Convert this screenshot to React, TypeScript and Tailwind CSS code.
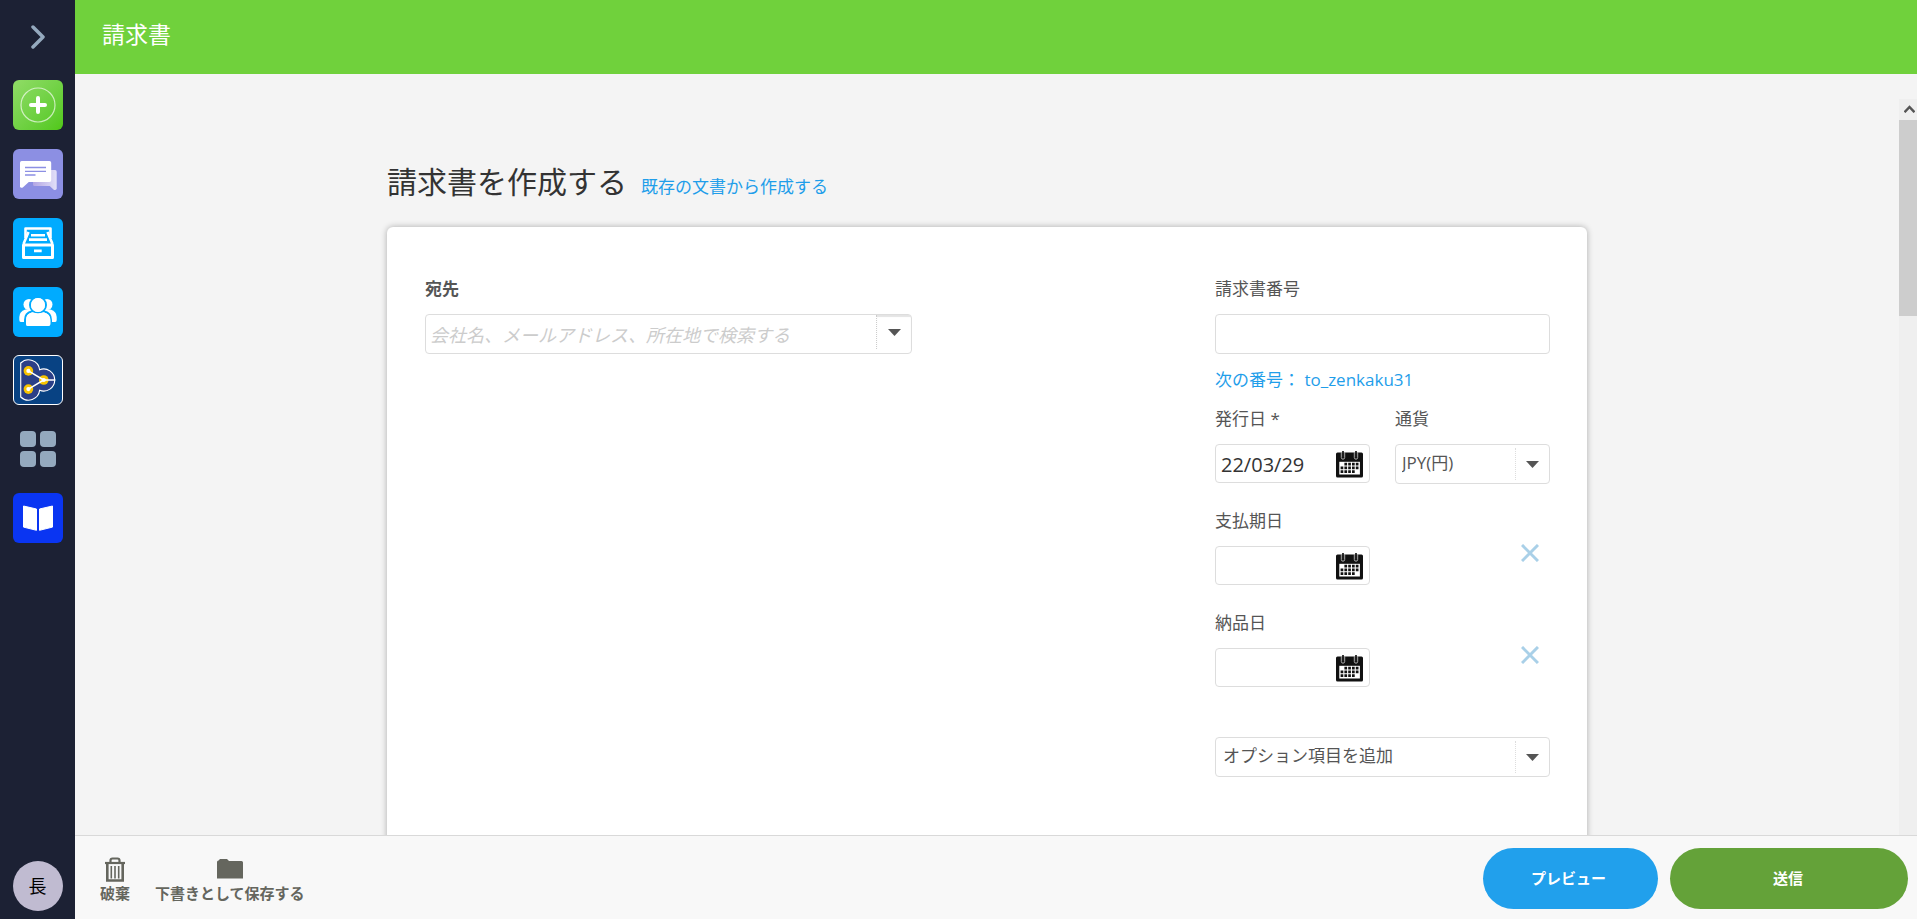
import { useState, type ReactNode } from "react";

function SideButton({ label, className = "", children }: { label: string; className?: string; children: ReactNode }) {
  return (
    <button type="button" aria-label={label} className={`size-[50px] rounded-md overflow-hidden ${className}`}>
      <svg viewBox="0 0 50 50" className="size-full" fill="none">
        {children}
      </svg>
    </button>
  );
}

function CalendarIcon() {
  return (
    <svg viewBox="0 0 27 27" className="size-[27px]">
      <rect x="0" y="1.5" width="27" height="25" rx="1.5" fill="#111" />
      <rect x="3.3" y="10.8" width="20.6" height="12.7" fill="#fff" />
      {[7, 20].map((x) => (
        <g key={x}>
          <path d={`M${x - 1.7} 1v5.500a1.700 1.700 0 003.400 0V1`} fill="none" stroke="#bbb" strokeWidth=".9" />
          <path d={`M${x} 0v6.500`} stroke="#222" strokeWidth="1.800" />
        </g>
      ))}
      <g stroke="#111" strokeWidth="2.700">
        <path d="M8.400 13.200H22.700" strokeDasharray="2.700 1.100" />
        <path d="M4.600 16.900H22.700" strokeDasharray="2.700 1.100" />
        <path d="M4.600 20.600H18.800" strokeDasharray="2.700 1.100" />
      </g>
    </svg>
  );
}

function Arrow() {
  return (
    <svg viewBox="0 0 13 7" className="w-[13px] h-[7px]" fill="#555">
      <path d="M0 0h13L6.5 7z" />
    </svg>
  );
}

function DateField({ id, label, initial = "" }: { id: string; label: string; initial?: string }) {
  const [value, setValue] = useState(initial);
  return (
    <div className="w-[155px]">
      <label htmlFor={id} className="block leading-6">{label}</label>
      <div className="mt-[13px] flex h-[39px] items-center rounded border border-[#ddd] bg-white pr-1.5">
        <input
          id={id}
          type="text"
          value={value}
          onChange={(e) => setValue(e.target.value)}
          className="min-w-0 flex-1 pl-[5px] pt-0.5 text-xl leading-7 text-[#333] outline-none"
        />
        <button type="button" aria-label={`${label} カレンダー`} className="pt-px">
          <CalendarIcon />
        </button>
      </div>
    </div>
  );
}

function SelectBox({ id, label, option, className }: { id: string; label?: string; option: string; className: string }) {
  return (
    <div className="relative h-10">
      <select
        id={id}
        aria-label={label}
        className={`h-full w-full appearance-none rounded border border-[#ddd] bg-white pb-0.5 outline-none ${className}`}
      >
        <option>{option}</option>
      </select>
      <span className="pointer-events-none absolute inset-y-1 right-0 flex w-[35px] items-center justify-center border-l border-dotted border-[#ddd] pr-0.5">
        <Arrow />
      </span>
    </div>
  );
}

function RemoveButton({ label }: { label: string }) {
  return (
    <button type="button" aria-label={label} className="mr-[11px] mt-[35px] h-[18px]">
      <svg viewBox="0 0 18 18" className="size-[18px]" stroke="#a9d0e8" strokeWidth="3">
        <path d="M1 1l16 16M17 1L1 17" />
      </svg>
    </button>
  );
}

function Sidebar() {
  return (
    <nav className="flex w-[75px] shrink-0 flex-col items-center bg-[#1c2134] pb-2">
      <button type="button" aria-label="メニューを開く" className="flex h-[74px] w-full items-center justify-center">
        <svg viewBox="0 0 14 24" className="h-6 w-3.5" fill="none" stroke="#94a9be" strokeWidth="3.500" strokeLinecap="round" strokeLinejoin="round">
          <path d="M2 2l10 10L2 22" />
        </svg>
      </button>
      <div className="mt-1.5 flex flex-col gap-[19px]">
        <SideButton label="作成" className="bg-linear-to-br from-[#90dc66] to-[#50c814]">
          <circle cx="25" cy="25" r="17" stroke="#fff" strokeOpacity=".65" strokeWidth="1.2" />
          <path d="M25 18v14M18 25h14" stroke="#fff" strokeWidth="4" strokeLinecap="round" />
        </SideButton>
        <SideButton label="メッセージ" className="bg-[#8c8fe3]">
          <defs>
            <linearGradient id="bubble" x1="20" y1="30" x2="44" y2="30" gradientUnits="userSpaceOnUse">
              <stop stopColor="#b3a6e4" />
              <stop offset="1" stopColor="#e2e0f8" />
            </linearGradient>
          </defs>
          <path d="M21.5 21h20.5a1.7 1.7 0 011.7 1.7v17q-.8 2-3 1l-4-3.7H21.5A1.5 1.5 0 0120 35.500V22.500z" fill="url(#bubble)" />
          <path d="M8.700 12h27.800A1.700 1.700 0 0138.200 13.700v17.600a1.700 1.700 0 01-1.700 1.700H15.800l-6 5.500q-2.200 1-2.800-.8V13.700A1.700 1.700 0 018.700 12z" fill="#fff" />
          <path d="M12 18.500h21M12 22.300h21M12 26h10.500" stroke="#8c8fe3" strokeWidth="1.3" />
        </SideButton>
        <SideButton label="ドキュメント" className="bg-[#00abff]">
          <g stroke="#fff">
            <path d="M10.500 27h29v12.500h-29z" strokeWidth="3" strokeLinejoin="round" />
            <path d="M12.500 20v-9.500h25V20" strokeWidth="2.600" strokeLinejoin="round" />
            <path d="M15.500 14L10.500 26M34.500 14l5 12" strokeWidth="2.600" />
            <path d="M18 17.300h14" strokeWidth="2.400" />
            <path d="M16 21.700h18M21 32.800h7.700" strokeWidth="2.800" />
          </g>
        </SideButton>
        <SideButton label="ネットワーク" className="bg-[#00abff]">
          <g fill="#fff">
            <circle cx="16" cy="17.500" r="5.500" />
            <circle cx="34" cy="17.500" r="5.500" />
            <path d="M6.300 33v-3q0-5.500 6-7.500h25.400q6 2 6 7.500v3q0 2-1.500 2H7.800q-1.500 0-1.500-2z" />
            <g stroke="#00abff" strokeWidth="2">
              <path d="M12 36.500V33q0-7 6.500-8.500h13Q38 26 38 33v3.500q0 3.500-3 3.500H15q-3 0-3-3.500z" />
              <circle cx="25" cy="18" r="8" />
            </g>
            <circle cx="25" cy="18" r="7" />
            <path d="M13 36.500V33q0-6 6.500-7.800Q25 27.500 30.500 25.200 37.500 27 37.500 33v3.500q0 2.500-2.500 2.500H15q-2 0-2-2.500z" />
          </g>
        </SideButton>
        <SideButton label="ビジネスアプリ" className="-mt-px border border-white bg-[#084283]">
          <path
            d="M7 7.300A11.700 11.700 0 0126.700 14.300A11.500 11.500 0 1126.700 35.700A11.700 11.700 0 017 42.700z"
            fill="#2b3f87"
            stroke="#fff"
            strokeWidth="1.200"
          />
          <g fill="#f8c300">
            <circle cx="15" cy="15.500" r="5" />
            <circle cx="15" cy="34.500" r="5" />
            <circle cx="31" cy="25" r="5" />
          </g>
          <path d="M15 15.500L31 25 15 34.500M31 25h12" stroke="#fff" strokeWidth="1.600" />
          <g fill="#fff">
            <circle cx="15" cy="15.500" r="2.200" />
            <circle cx="15" cy="34.500" r="2.200" />
            <circle cx="31" cy="25" r="2.200" />
          </g>
        </SideButton>
        <SideButton label="アプリ一覧">
          <g fill="#94a9be">
            <rect x="7" y="7" width="16" height="16" rx="4" />
            <rect x="27" y="7" width="16" height="16" rx="4" />
            <rect x="7" y="27" width="16" height="16" rx="4" />
            <rect x="27" y="27" width="16" height="16" rx="4" />
          </g>
        </SideButton>
        <SideButton label="ガイド" className="bg-[#0a35f2]">
          <g fill="#fff" stroke="#fff" strokeLinejoin="round">
            <path d="M10.500 13l13 3v21.300l-13-3.200zM39.500 13l-13 3v21.300l13-3.200z" />
          </g>
        </SideButton>
      </div>
      <button type="button" className="mt-auto size-[50px] rounded-full bg-[#c0bbd1] text-lg text-black">長</button>
    </nav>
  );
}

function InvoiceForm() {
  return (
    <form className="flex min-h-[900px] items-start justify-between rounded-md bg-white pb-12 pl-[38px] pr-[37px] pt-[50px] shadow-[0_0_6px_rgba(0,0,0,0.3)]">
      <div className="w-[487px]">
        <label htmlFor="recipient" className="block font-bold leading-6">宛先</label>
        <div className="mt-[13px] flex h-10 rounded border border-[#ddd] bg-white">
          <input
            id="recipient"
            type="text"
            placeholder="会社名、メールアドレス、所在地で検索する"
            className="min-w-0 flex-1 pl-1 pt-0.5 text-lg leading-7 outline-none placeholder:italic placeholder:text-[#ccc]"
          />
          <button
            type="button"
            aria-label="宛先を選択"
            className="mb-1 flex w-[35px] items-center justify-center border-l border-dotted border-[#ccc] shadow-[inset_0_2px_1px_#e4e4e4]"
          >
            <Arrow />
          </button>
        </div>
      </div>

      <div className="w-[335px]">
        <label htmlFor="number" className="block leading-6">請求書番号</label>
        <input id="number" type="text" className="mt-[13px] block h-10 w-full rounded border border-[#ddd] px-1.5 outline-none" />
        <a href="#number" className="mt-3.5 block leading-6 text-[#1f9eea]">次の番号： to_zenkaku31</a>

        <div className="mt-[15px] flex items-start justify-between">
          <DateField id="issued" label="発行日 *" initial="22/03/29" />
          <div className="w-[155px]">
            <label htmlFor="currency" className="mb-[13px] block leading-6">通貨</label>
            <SelectBox id="currency" option="JPY(円)" className="pl-1.5" />
          </div>
        </div>
        <div className="mt-[25px] flex items-start justify-between">
          <DateField id="due" label="支払期日" />
          <RemoveButton label="支払期日を削除" />
        </div>
        <div className="mt-[26px] flex items-start justify-between">
          <DateField id="delivery" label="納品日" />
          <RemoveButton label="納品日を削除" />
        </div>
        <div className="mt-[50px]">
          <SelectBox id="extra" label="オプション項目" option="オプション項目を追加" className="pl-[7px]" />
        </div>
      </div>
    </form>
  );
}

function Footer() {
  return (
    <footer className="flex h-[84px] shrink-0 items-center border-t border-[#d9d9d9] bg-[#f8f8f8] pl-[25px] pr-[9px] pt-0.5 text-[15px] font-bold">
      <button type="button" className="flex flex-col items-center pt-1 text-[#65665e]">
        <svg viewBox="0 0 20 25" className="h-[25px] w-5" fill="none" stroke="currentColor">
          <path d="M5.500 5V3.500q0-2 2-2h5q2 0 2 2V5" strokeWidth="2.200" />
          <path d="M0 6h20" strokeWidth="2.200" />
          <path d="M2.300 6v17.500h15.400V6" strokeWidth="2.600" />
          <path d="M6.300 9v12.500M10 9v12.500M13.700 9v12.500" strokeWidth="1.600" />
        </svg>
        <span className="leading-[22px]">破棄</span>
      </button>
      <button type="button" className="ml-[25px] flex flex-col items-center pt-1 text-[#65665e]">
        <svg viewBox="0 0 26 25" className="h-[25px] w-[26px]" fill="currentColor">
          <path d="M0 5q0-1.500 1.500-1.500L3 2h7l2 2h12.500Q26 4 26 5.500v16H0z" />
        </svg>
        <span className="leading-[22px]">下書きとして保存する</span>
      </button>
      <div className="ml-auto flex gap-3 text-white">
        <button type="button" className="h-[61px] w-[175px] rounded-full bg-[#21a0ec] pr-1">プレビュー</button>
        <button type="button" className="h-[61px] w-[238px] rounded-full bg-[#64a239] pr-0.5">送信</button>
      </div>
    </footer>
  );
}

export default function App() {
  return (
    <div className="flex h-screen bg-[#f4f4f4] font-['Open_Sans','Noto_Sans_CJK_JP',sans-serif] text-[17px] text-[#555]">
      <Sidebar />
      <div className="flex min-w-0 flex-1 flex-col">
        <header className="flex h-[74px] shrink-0 items-center bg-[#70d13c] px-[27px] pb-1.5 text-[23px] text-white">請求書</header>
        <div className="flex min-h-0 flex-1">
          <main className="min-w-0 flex-1 overflow-hidden">
            <div className="mx-auto max-w-[1200px] pt-[86px]">
              <div className="mb-6 flex items-baseline gap-3.5">
                <h1 className="text-3xl leading-[43px] text-[#333]">請求書を作成する</h1>
                <a href="#recipient" className="text-[#1f9eea]">既存の文書から作成する</a>
              </div>
              <InvoiceForm />
            </div>
          </main>
          {/* スクロールバー */}
          <div className="mt-[25px] flex w-[18px] shrink-0 flex-col bg-[#efefef]" aria-hidden="true">
            <div className="flex h-[21px] items-center justify-center pb-0.5 pl-0.5">
              <svg viewBox="0 0 11 8" className="h-2 w-[11px]" fill="none" stroke="#555" strokeWidth="2.500">
                <path d="M.5 7.200l5-5.200 5 5.200" />
              </svg>
            </div>
            <div className="h-[196px] bg-[#cdcdcd]" />
          </div>
        </div>
        <Footer />
      </div>
    </div>
  );
}
